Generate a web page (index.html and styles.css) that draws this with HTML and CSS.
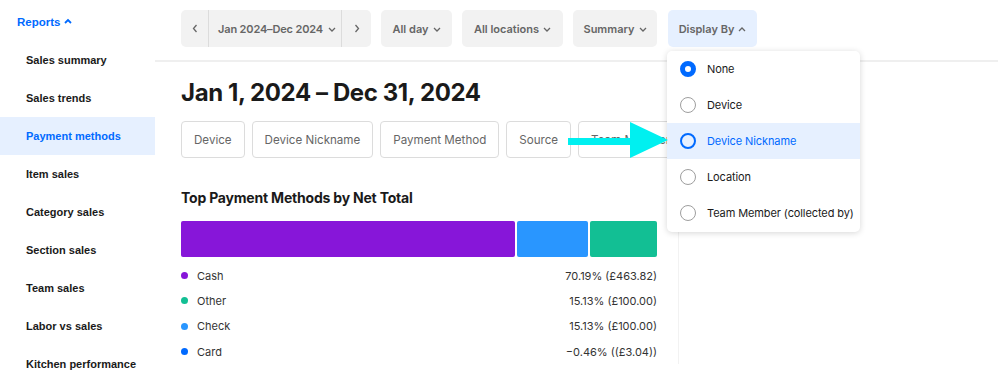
FILE: index.html
```html
<!DOCTYPE html>
<html>
<head>
<meta charset="utf-8">
<link rel="stylesheet" href="styles.css">
</head>
<body>
<div class="app">
  <nav class="sidebar">
    <div class="reports">Reports <svg class="caret" width="8" height="6" viewBox="0 0 8 6"><path d="M1 5 L4 2 L7 5" fill="none" stroke="#006aff" stroke-width="1.8"/></svg></div>
    <div class="nav-item">Sales summary</div>
    <div class="nav-item">Sales trends</div>
    <div class="nav-item active">Payment methods</div>
    <div class="nav-item">Item sales</div>
    <div class="nav-item">Category sales</div>
    <div class="nav-item">Section sales</div>
    <div class="nav-item">Team sales</div>
    <div class="nav-item">Labor vs sales</div>
    <div class="nav-item">Kitchen performance</div>
  </nav>
  <main class="main">
    <div class="toolbar">
      <div class="btn date-group">
        <span class="seg arrow-seg prev"><svg width="6" height="9" viewBox="0 0 6 9"><path d="M4.5 1 L1.5 4.5 L4.5 8" fill="none" stroke="#666" stroke-width="1.3"/></svg></span>
        <span class="seg date-seg">Jan 2024–Dec 2024 <svg class="chev" width="8" height="5" viewBox="0 0 8 5"><path d="M1 1 L4 4 L7 1" fill="none" stroke="#666" stroke-width="1.3"/></svg></span>
        <span class="seg arrow-seg next"><svg width="6" height="9" viewBox="0 0 6 9"><path d="M1.5 1 L4.5 4.5 L1.5 8" fill="none" stroke="#666" stroke-width="1.3"/></svg></span>
      </div>
      <div class="btn w-day">All day <svg class="chev" width="8" height="5" viewBox="0 0 8 5"><path d="M1 1 L4 4 L7 1" fill="none" stroke="#666" stroke-width="1.3"/></svg></div>
      <div class="btn w-loc">All locations <svg class="chev" width="8" height="5" viewBox="0 0 8 5"><path d="M1 1 L4 4 L7 1" fill="none" stroke="#666" stroke-width="1.3"/></svg></div>
      <div class="btn w-sum">Summary <svg class="chev" width="8" height="5" viewBox="0 0 8 5"><path d="M1 1 L4 4 L7 1" fill="none" stroke="#666" stroke-width="1.3"/></svg></div>
      <div class="btn w-disp open">Display By <svg class="chev" width="8" height="5" viewBox="0 0 8 5"><path d="M1 4 L4 1 L7 4" fill="none" stroke="#666" stroke-width="1.3"/></svg>
        <div class="menu">
          <div class="opt"><span class="radio checked"></span>None</div>
          <div class="opt"><span class="radio"></span>Device</div>
          <div class="opt hover"><span class="radio"></span>Device Nickname</div>
          <div class="opt"><span class="radio"></span>Location</div>
          <div class="opt"><span class="radio"></span>Team Member (collected by)</div>
        </div>
      </div>
    </div>
    <div class="content">
      <section class="left">
        <h1 class="title">Jan 1, 2024 – Dec 31, 2024</h1>
        <div class="chips">
          <div class="chip">Device</div>
          <div class="chip">Device Nickname</div>
          <div class="chip">Payment Method</div>
          <div class="chip">Source</div>
          <div class="chip">Team Member</div>
        </div>
        <h2 class="chart-title">Top Payment Methods by Net Total</h2>
        <div class="bar">
          <div class="seg-bar purple" style="width:334px"></div>
          <div class="seg-bar blue" style="width:71px"></div>
          <div class="seg-bar green" style="flex:1"></div>
        </div>
        <ul class="legend">
          <li><span class="dot purple"></span><span class="lbl">Cash</span><span class="val">70.19% (£463.82)</span></li>
          <li><span class="dot green"></span><span class="lbl">Other</span><span class="val">15.13% (£100.00)</span></li>
          <li><span class="dot blue"></span><span class="lbl">Check</span><span class="val">15.13% (£100.00)</span></li>
          <li><span class="dot card"></span><span class="lbl">Card</span><span class="val">−0.46% ((£3.04))</span></li>
        </ul>
      </section>
    </div>
  </main>
</div>
<svg class="pointer" width="104" height="40" viewBox="0 0 104 40"><polygon points="0,16 62,16 62,0 100,18 62,36 62,23 0,23" fill="#00f0f0"/></svg>
</body>
</html>
```
FILE: styles.css
```css
* { box-sizing: border-box; }
html, body { margin: 0; padding: 0; background: #fff; }
body { width: 998px; height: 382px; overflow: hidden; font-family: Inter, "Noto Sans", sans-serif; color: #1a1a1a; position: relative; }
.app { display: flex; height: 382px; }

.sidebar { width: 155px; flex: none; font-family: "Liberation Sans", Arial, sans-serif; }
.reports { color: #006aff; font-weight: 700; font-size: 11.5px; height: 41px; padding-left: 17px; padding-top: 2px; display: flex; align-items: center; gap: 4px; }
.caret { margin-top: -1px; }
.nav-item { height: 38px; display: flex; align-items: center; padding-left: 26px; font-size: 11px; font-weight: 700; color: #1a1a1a; }
.nav-item.active { background: #e6f0ff; color: #006aff; }

.main { flex: 1; padding-left: 26px; position: relative; }
.toolbar { display: flex; gap: 10px; padding-top: 10px; height: 62px; border-bottom: 2px solid #efefef; margin-left: -26px; padding-left: 26px; }
.btn { height: 37px; background: #f2f2f2; border-radius: 5px; padding: 0 8px; display: flex; align-items: center; justify-content: center; gap: 4px; font-size: 11px; font-weight: 600; color: #666; position: relative; white-space: nowrap; }
.w-day { width: 71px; }
.w-loc { width: 101px; }
.w-sum { width: 84px; }
.w-disp { width: 89px; margin-left: 1px; }
.btn.open { background: #e6f0ff; }
.chev { margin-top: 1px; }
.date-group { padding: 0; gap: 0; width: 190px; justify-content: flex-start; }
.seg { height: 37px; display: flex; align-items: center; }
.arrow-seg { justify-content: center; }
.prev { width: 27px; }
.next { width: 29px; }
.date-seg { border-left: 1px solid #dcdcdc; border-right: 1px solid #dcdcdc; padding: 0 0 0 9px; gap: 5px; width: 134px; letter-spacing: -0.15px; }

.menu { position: absolute; top: 41px; left: -1px; width: 193px; background: #fff; border-radius: 5px; box-shadow: 0 1px 6px rgba(0,0,0,0.16); z-index: 5; padding: 0 0 1px; }
.opt { height: 36px; display: flex; align-items: center; padding-left: 13px; gap: 11px; font-size: 11px; font-weight: 400; color: #1a1a1a; white-space: nowrap; letter-spacing: -0.1px; }
.opt.hover { background: #e6f0ff; color: #006aff; }
.radio { width: 16px; height: 16px; border-radius: 50%; border: 1.5px solid #9e9e9e; flex: none; }
.radio.checked { border: 5px solid #006aff; }
.opt.hover .radio { border: 2px solid #006aff; }

.content { display: flex; }
.left { width: 498px; padding-right: 21px; border-right: 1px solid #f2f2f2; height: 302px; }
.title { margin: 16px 0 0; font-size: 24px; font-weight: 700; line-height: 30px; letter-spacing: -0.4px; color: #1a1a1a; }
.chips { display: flex; gap: 7px; margin-top: 13px; white-space: nowrap; }
.chip { height: 37px; border: 1px solid #dcdcdc; border-radius: 4px; padding: 0 12px; display: flex; align-items: center; font-size: 11.6px; color: #666; }
.chart-title { margin: 30px 0 0; font-size: 14px; font-weight: 700; line-height: 20px; letter-spacing: -0.2px; color: #1a1a1a; }
.bar { display: flex; gap: 2px; margin-top: 13px; height: 36px; }
.seg-bar { height: 36px; border-radius: 2px; }
.purple { background: #8716d9; }
.blue { background: #2996ff; }
.green { background: #12bf94; }
.card { background: #006aff; }
.legend { list-style: none; margin: 6px 0 0; padding: 0; }
.legend li { height: 25.3px; display: flex; align-items: center; font-size: 11px; color: #333; }
.dot { width: 7px; height: 7px; border-radius: 50%; margin-right: 9px; flex: none; }
.lbl { flex: 1; }
.val { text-align: right; }

.pointer { position: absolute; left: 568px; top: 122px; z-index: 6; }
```
